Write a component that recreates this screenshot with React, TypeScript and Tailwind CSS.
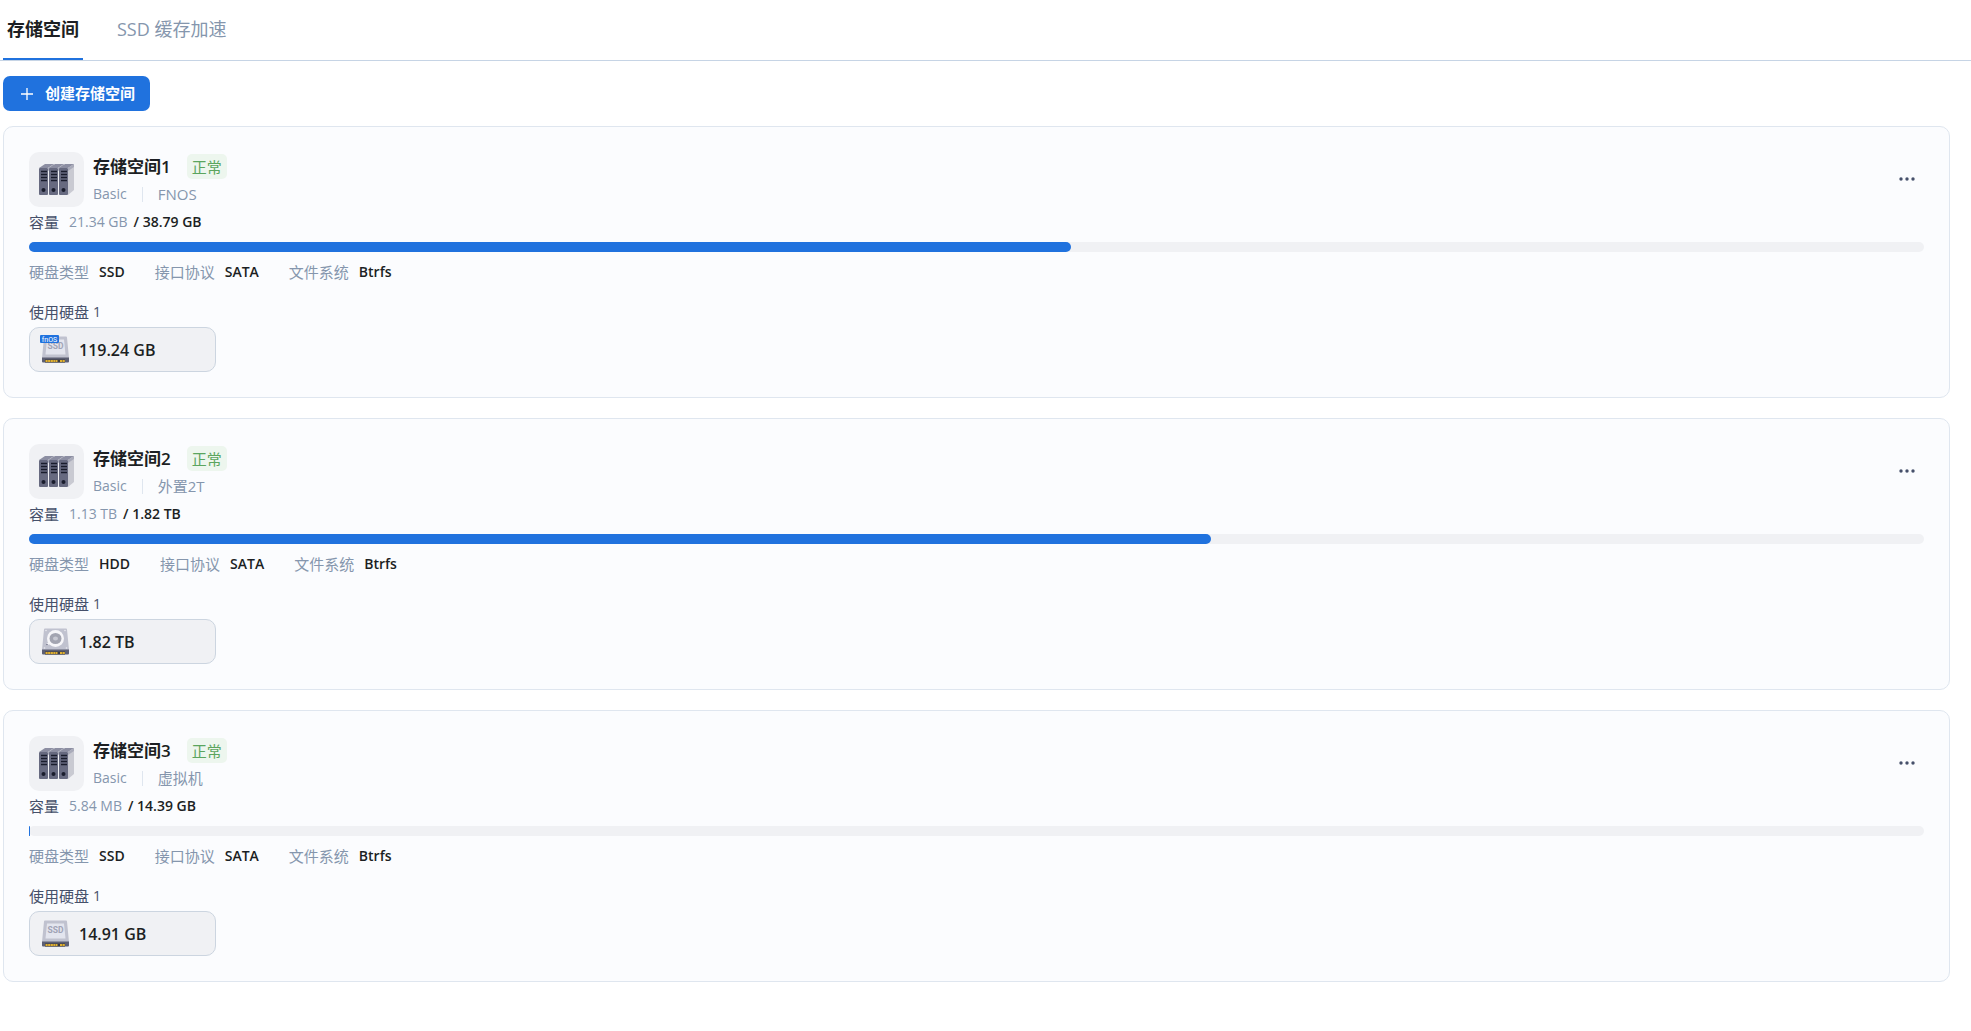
import { useState } from "react";

type DiskKind = "ssd" | "hdd";

interface StoragePool {
  id: number;
  mode: string;
  remark: string;
  used: string;
  total: string;
  percent: number;
  diskType: string;
  protocol: string;
  fileSystem: string;
  disks: { kind: DiskKind; size: string; system?: boolean }[];
}

const pools: StoragePool[] = [
  {
    id: 1,
    mode: "Basic",
    remark: "FNOS",
    used: "21.34 GB",
    total: "38.79 GB",
    percent: 55,
    diskType: "SSD",
    protocol: "SATA",
    fileSystem: "Btrfs",
    disks: [{ kind: "ssd", size: "119.24 GB", system: true }],
  },
  {
    id: 2,
    mode: "Basic",
    remark: "外置2T",
    used: "1.13 TB",
    total: "1.82 TB",
    percent: 62.4,
    diskType: "HDD",
    protocol: "SATA",
    fileSystem: "Btrfs",
    disks: [{ kind: "hdd", size: "1.82 TB" }],
  },
  {
    id: 3,
    mode: "Basic",
    remark: "虚拟机",
    used: "5.84 MB",
    total: "14.39 GB",
    percent: 0.05,
    diskType: "SSD",
    protocol: "SATA",
    fileSystem: "Btrfs",
    disks: [{ kind: "ssd", size: "14.91 GB" }],
  },
];

const tabs = ["存储空间", "SSD 缓存加速"];

function PoolIcon() {
  return (
    <svg width="37" height="34" viewBox="0 0 37 34" aria-hidden="true">
      <path d="M30 5l6-4v26l-6 5z" fill="#c9cad2" />
      {[0, 10, 20].map((x) => (
        <g key={x} transform={`translate(${x} 0)`}>
          <path d="M1 5l6-4h9l-6 4z" fill="#8c8ea2" />
          <path d="M10 5l6-4v3l-6 4z" fill="#a9abba" />
          <rect x="1" y="5" width="9" height="27" rx="1" fill="#676a80" />
          <path
            d="M3 8.5h6M3 11.5h6M3 14.5h6M3 17.5h6"
            stroke="#191c2c"
            strokeWidth="1.4"
          />
          <circle cx="5.5" cy="27" r="2" fill="#191c2c" />
        </g>
      ))}
    </svg>
  );
}

function DiskIcon({ kind, system }: { kind: DiskKind; system?: boolean }) {
  return (
    <svg width="30" height="30" viewBox="0 0 30 30" aria-hidden="true">
      <path d="M4 2.5q0-1 1-1h21q1 0 1 1l2 20.5H2z" fill="#c0c2cf" />
      <path d="M2 22.5h27v4q0 1-1 1H3q-1 0-1-1z" fill="#5c5f73" />
      <path d="M5 24.5h20v3H5z" fill="#3b3a3f" />
      <path
        d="M5.5 26h12M20 26h5"
        stroke="#e0b030"
        strokeWidth="2"
        strokeDasharray="2.2 0.4"
      />
      {kind === "ssd" ? (
        <>
          <path d="M7 4.5h17l1.5 15h-20z" fill="#e3e5ee" />
          <text
            x="15.5"
            y="14"
            textAnchor="middle"
            fontSize="8.5"
            fontWeight="700"
            fontFamily="Roboto, sans-serif"
            fill="#a0a3b5"
          >
            SSD
          </text>
        </>
      ) : (
        <>
          <circle cx="15.5" cy="11.5" r="8.5" fill="#f6f6f9" />
          <ellipse cx="15.5" cy="11.5" rx="6" ry="5.5" fill="#a3a5b1" />
          <ellipse cx="15.5" cy="11.5" rx="2.5" ry="2" fill="#c9cad3" />
          <path d="M7 17.5l3-2" stroke="#f6f6f9" strokeWidth="2" />
          <circle cx="7" cy="17.5" r="0.8" fill="#70738a" />
          <g fill="#e9eaf0">
            <circle cx="6" cy="3.5" r="0.8" />
            <circle cx="25" cy="3.5" r="0.8" />
            <circle cx="4.5" cy="21" r="0.8" />
            <circle cx="26.5" cy="21" r="0.8" />
          </g>
        </>
      )}
      {system && (
        <>
          <rect x="0" y="0" width="19" height="8" rx="1" fill="#2072de" />
          <text
            x="9.5"
            y="6.5"
            textAnchor="middle"
            fontSize="7"
            fontFamily="Roboto, sans-serif"
            fill="#fff"
          >
            fnOS
          </text>
        </>
      )}
    </svg>
  );
}

function MetaItem({ label, value }: { label: string; value: string }) {
  return (
    <div className="flex h-5 gap-[10px]">
      <dt className="text-[15px] leading-5 text-[#8596ad]">{label}</dt>
      <dd className="text-sm leading-5 font-semibold text-[#1c1f23]">{value}</dd>
    </div>
  );
}

function PoolCard({ pool }: { pool: StoragePool }) {
  return (
    <section className="rounded-[10px] border border-[#dfe6ef] bg-[#fbfcfe] p-[25px] text-[15px] leading-5">
      <div className="flex items-center gap-[9px]">
        <div className="flex size-[55px] items-center justify-center rounded-[10px] bg-[#f0f1f4]">
          <PoolIcon />
        </div>
        <div className="flex-1">
          <div className="flex h-[29px] items-center gap-4">
            <h2 className="text-[17px] font-bold text-[#1c1f23]">
              存储空间<span className="font-semibold">{pool.id}</span>
            </h2>
            <span className="flex h-[25px] items-center rounded-[5px] bg-[#edf6ee] px-[5px] text-[#5ba55e]">
              正常
            </span>
          </div>
          <div className="flex h-[26px] items-center text-[#8596ad]">
            <span className="text-sm">{pool.mode}</span>
            <span className="mx-[15px] h-[15px] w-px bg-[#dfe6ef]" />
            <span>{pool.remark}</span>
          </div>
        </div>
        <button
          type="button"
          aria-label="更多"
          className="flex size-[35px] items-center justify-center rounded"
        >
          <svg width="16" height="5" viewBox="0 0 16 5" fill="#46506a">
            <circle cx="2" cy="2" r="1.7" />
            <circle cx="8" cy="2" r="1.7" />
            <circle cx="14" cy="2" r="1.7" />
          </svg>
        </button>
      </div>

      <div className="mt-[5px] flex h-5">
        <span className="mr-[10px] text-[#46506a]">容量</span>
        <span className="text-sm leading-5 text-[#8596ad]">{pool.used}</span>
        <span className="ml-[6px] text-sm leading-5 font-semibold text-[#1c1f23]">
          / {pool.total}
        </span>
      </div>

      <div className="mt-[10px] h-[10px] rounded-[5px] bg-[#f0f1f4]">
        <div
          className="h-full min-w-px rounded-[5px] bg-[#2072de]"
          style={{ width: `${pool.percent}%` }}
        />
      </div>

      <dl className="mt-[10px] flex gap-[30px]">
        <MetaItem label="硬盘类型" value={pool.diskType} />
        <MetaItem label="接口协议" value={pool.protocol} />
        <MetaItem label="文件系统" value={pool.fileSystem} />
      </dl>

      <p className="mt-5 flex h-5 gap-1 text-[#46506a]">
        使用硬盘 <span className="text-sm leading-5">{pool.disks.length}</span>
      </p>
      <div className="mt-[5px] flex flex-wrap gap-[10px]">
        {pool.disks.map((disk) => (
          <div
            key={disk.size}
            className="flex h-[45px] w-[187px] items-center gap-[9px] rounded-[10px] border border-[#ccd5e0] bg-[#f0f1f4] px-[10px]"
          >
            <DiskIcon kind={disk.kind} system={disk.system} />
            <span className="text-base font-semibold text-[#1c1f23]">
              {disk.size}
            </span>
          </div>
        ))}
      </div>
    </section>
  );
}

export default function App() {
  const [active, setActive] = useState(tabs[0]);

  return (
    <div className="min-h-screen bg-white font-['Open_Sans','Noto_Sans_CJK_SC',sans-serif]">
      {/* Tabs */}
      <nav className="flex h-[61px] gap-[30px] border-b border-[#c6d4e5] pl-[3px]">
        {tabs.map((tab) => (
          <button
            key={tab}
            type="button"
            onClick={() => setActive(tab)}
            className={
              tab === active
                ? "border-b-2 border-[#2072de] px-1 text-[18px] font-bold text-[#1c1f23]"
                : "border-b-2 border-transparent px-1 text-[18px] text-[#8596ad]"
            }
          >
            {tab}
          </button>
        ))}
      </nav>

      <main className="pt-[15px] pr-[21px] pb-[49px] pl-[3px]">
        <button
          type="button"
          className="flex h-[35px] items-center gap-[10px] rounded-[7px] bg-[#2072de] pr-[15px] pl-4 text-[15px] font-bold text-white"
        >
          <svg width="16" height="16" viewBox="0 0 16 16" stroke="#fff" strokeWidth="1.3">
            <path d="M8 2v12M2 8h12" />
          </svg>
          创建存储空间
        </button>

        <div className="mt-[15px] flex flex-col gap-5">
          {pools.map((pool) => (
            <PoolCard key={pool.id} pool={pool} />
          ))}
        </div>
      </main>
    </div>
  );
}
